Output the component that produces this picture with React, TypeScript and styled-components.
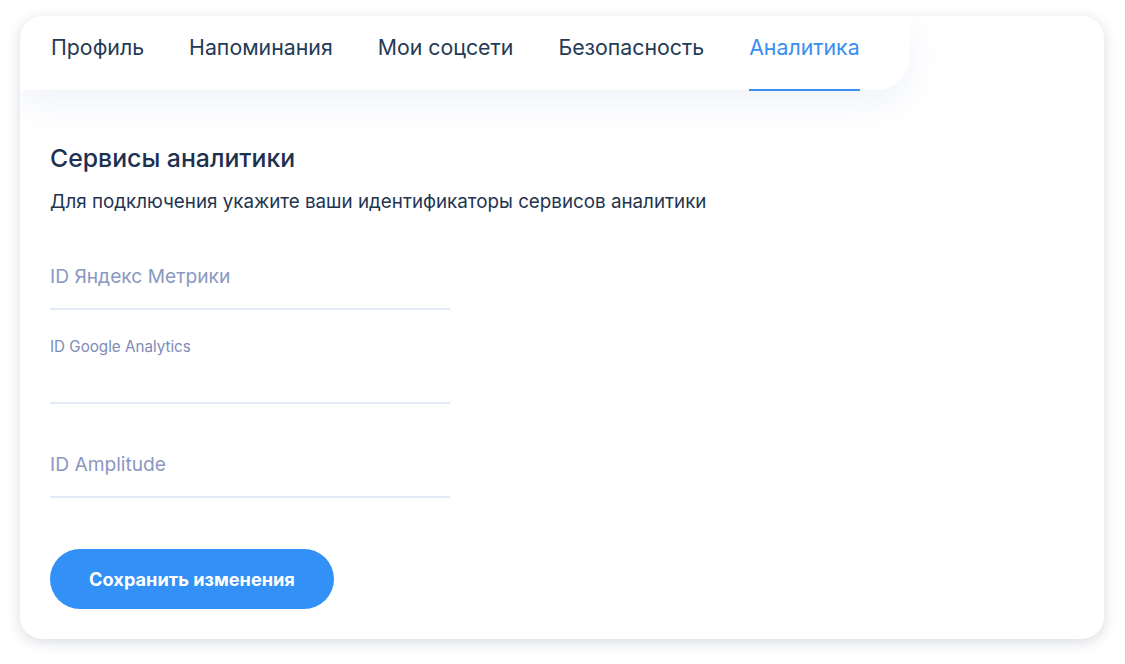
import React, { useState } from 'react';
import styled, { createGlobalStyle } from 'styled-components';

const GlobalStyle = createGlobalStyle`
  html, body {
    margin: 0;
    padding: 0;
    background: #ffffff;
  }
  body {
    font-family: Inter, "Noto Sans", "Liberation Sans", sans-serif;
    -webkit-font-smoothing: antialiased;
  }
  * {
    box-sizing: border-box;
  }
`;

const tabs = ['Профиль', 'Напоминания', 'Мои соцсети', 'Безопасность', 'Аналитика'];

const fields = [
  { id: 'ym', label: 'ID Яндекс Метрики', floated: false },
  { id: 'ga', label: 'ID Google Analytics', floated: true },
  { id: 'amp', label: 'ID Amplitude', floated: false },
];

const App: React.FC = () => {
  const [active, setActive] = useState('Аналитика');
  const [values, setValues] = useState<Record<string, string>>({});

  return (
    <>
      <GlobalStyle />
      <Page>
        <Card>
          <TabBar>
            {tabs.map((t) => (
              <Tab key={t} active={t === active} onClick={() => setActive(t)}>
                {t}
              </Tab>
            ))}
          </TabBar>

          <Content>
            <Title>Сервисы аналитики</Title>
            <Description>
              Для подключения укажите ваши идентификаторы сервисов аналитики
            </Description>

            <Form>
              {fields.map((f) => (
                <Field key={f.id}>
                  {f.floated && <FloatLabel>{f.label}</FloatLabel>}
                  <Input
                    value={values[f.id] || ''}
                    placeholder={f.floated ? '' : f.label}
                    onChange={(e) => setValues({ ...values, [f.id]: e.target.value })}
                  />
                </Field>
              ))}
            </Form>

            <SaveButton>Сохранить изменения</SaveButton>
          </Content>
        </Card>
      </Page>
    </>
  );
};

const Page = styled.div`
  padding: 16px 21px 25px 20px;
`;

const Card = styled.div`
  background: #ffffff;
  border-radius: 22px;
  box-shadow: 0 3px 14px rgba(20, 30, 60, 0.16);
  height: 623px;
  overflow: hidden;
`;

const TabBar = styled.nav`
  display: flex;
  align-items: stretch;
  gap: 45px;
  width: 890px;
  height: 74px;
  padding: 0 50px 0 31px;
  background: #ffffff;
  border-radius: 22px 0 34px 0;
  box-shadow: 0 14px 32px rgba(90, 120, 200, 0.09);
`;

const Tab = styled.button<{ active: boolean }>`
  display: flex;
  align-items: center;
  padding: 0 0 12px;
  background: none;
  border: none;
  border-bottom: 2px solid ${({ active }) => (active ? '#3a8ef0' : 'transparent')};
  font-family: inherit;
  font-size: 21.3px;
  font-weight: 400;
  white-space: nowrap;
  color: ${({ active }) => (active ? '#3a8ef0' : '#253a55')};
  cursor: pointer;
  margin-bottom: -1px;
`;

const Content = styled.div`
  padding: 53px 30px 0;
`;

const Title = styled.h2`
  margin: 0;
  font-size: 24.8px;
  line-height: 30px;
  font-weight: 500;
  color: #1d3150;
`;

const Description = styled.p`
  margin: 16px 0 0;
  font-size: 18.8px;
  line-height: 26px;
  color: #22344f;
  white-space: nowrap;
`;

const Form = styled.div`
  display: flex;
  flex-direction: column;
  width: 400px;
  margin-top: 1px;
`;

const Field = styled.label`
  position: relative;
  display: block;
  padding-top: 28px;
`;

const FloatLabel = styled.span`
  position: absolute;
  top: 29px;
  left: 0;
  font-size: 15.2px;
  line-height: 16px;
  color: #7d8cb4;
  white-space: nowrap;
`;

const Input = styled.input`
  display: block;
  width: 100%;
  height: 66px;
  padding: 0;
  border: none;
  border-bottom: 2px solid #e4e9f8;
  outline: none;
  background: transparent;
  font-family: inherit;
  font-size: 19.2px;
  color: #1d3150;

  &::placeholder {
    color: #8a98c2;
  }
`;

const SaveButton = styled.button`
  margin-top: 51px;
  width: 284px;
  height: 60px;
  border: none;
  border-radius: 30px;
  background: #3390f6;
  color: #ffffff;
  font-family: inherit;
  font-size: 18.2px;
  font-weight: 700;
  cursor: pointer;
`;

export default App;
